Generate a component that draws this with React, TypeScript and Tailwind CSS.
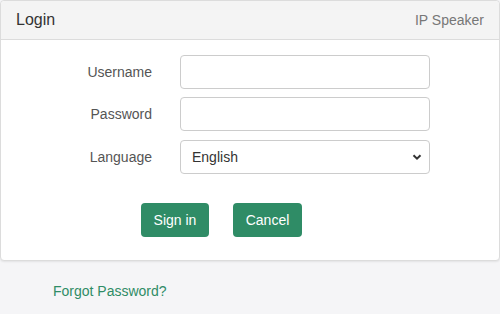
export default function App() {
  return (
    <div className="w-[500px] h-[314px] bg-[#f5f5f7] overflow-hidden" style={{ fontFamily: '"Liberation Sans", Arial, sans-serif' }}>
      <div className="w-[500px] bg-white border border-[#dcdcdc] rounded-[4px] shadow-[0_1px_2px_rgba(0,0,0,0.08)]">
        <div className="h-[39px] bg-[#f4f4f4] border-b border-[#dcdcdc] rounded-t-[4px] flex items-center justify-between pl-[15px] pr-[15px]">
          <span className="text-[16px] text-[#333]">Login</span>
          <span className="text-[14px] text-[#777]">IP Speaker</span>
        </div>
        <div className="pt-[15px] pb-[23px] flex flex-col">
          <div className="flex items-center h-[34px]">
            <label className="w-[151px] text-right text-[14px] text-[#555]">Username</label>
            <input className="ml-[28px] w-[250px] h-[34px] border border-[#ccc] rounded-[4px] px-3 text-[14px] outline-none" />
          </div>
          <div className="flex items-center h-[34px] mt-[8px]">
            <label className="w-[151px] text-right text-[14px] text-[#555]">Password</label>
            <input type="password" className="ml-[28px] w-[250px] h-[34px] border border-[#ccc] rounded-[4px] px-3 text-[14px] outline-none" />
          </div>
          <div className="flex items-center h-[34px] mt-[9px]">
            <label className="w-[151px] text-right text-[14px] text-[#555]">Language</label>
            <div className="ml-[28px] w-[250px] h-[34px] border border-[#ccc] rounded-[4px] flex items-center justify-between pl-[11px] pr-[7px]">
              <span className="text-[14px] text-[#333]">English</span>
              <svg width="10" height="8" viewBox="0 0 10 8">
                <path d="M1.5 2.2 L5 5.7 L8.5 2.2" fill="none" stroke="#333" strokeWidth="2" />
              </svg>
            </div>
          </div>
          <div className="flex mt-[29px] pl-[140px] gap-[24px]">
            <button className="w-[68px] h-[34px] bg-[#2f8c66] text-white text-[14px] rounded-[4px]">Sign in</button>
            <button className="w-[69px] h-[34px] bg-[#2f8c66] text-white text-[14px] rounded-[4px]">Cancel</button>
          </div>
        </div>
      </div>
      <div className="pl-[53px] pt-[20px] text-[14px] text-[#2f8c66]">Forgot Password?</div>
    </div>
  );
}
